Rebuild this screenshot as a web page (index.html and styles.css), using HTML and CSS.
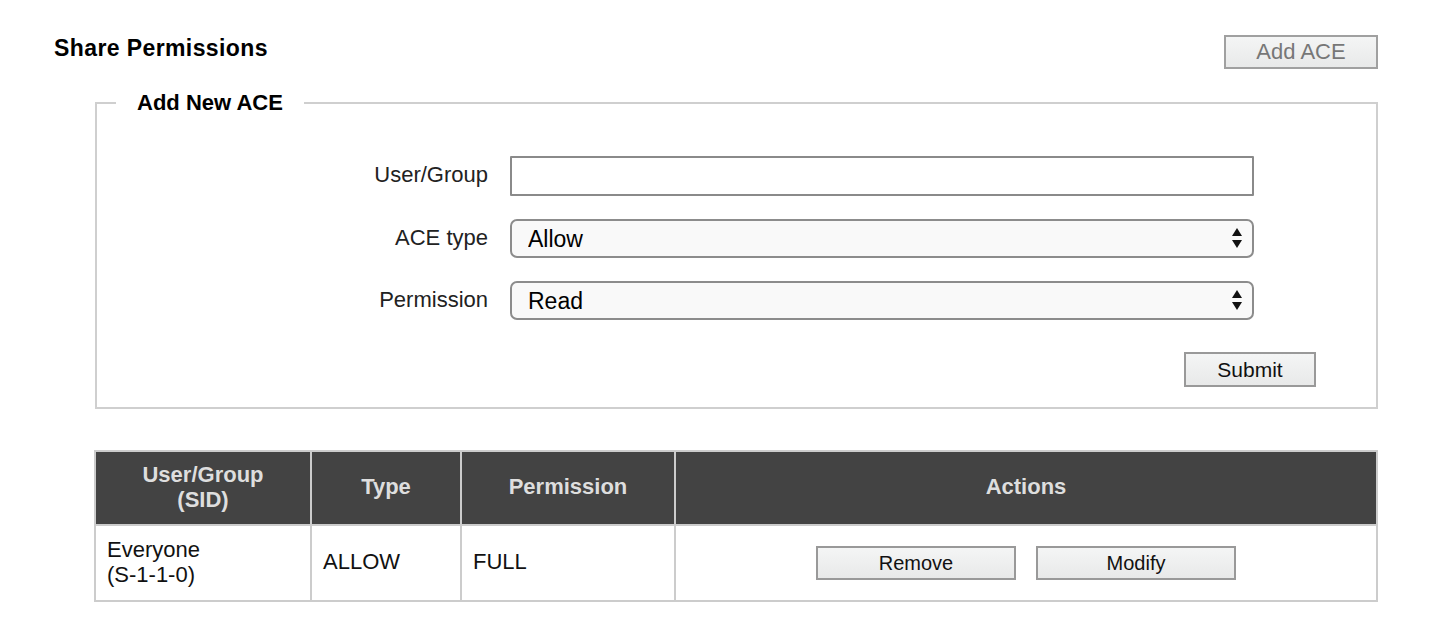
FILE: index.html
```html
<!DOCTYPE html>
<html>
<head>
<meta charset="utf-8">
<link rel="stylesheet" href="styles.css">
</head>
<body>
<div class="page">
  <div class="topbar">
    <h1 class="title">Share Permissions</h1>
    <button class="btn btn-add">Add ACE</button>
  </div>

  <fieldset class="ace-box">
    <legend class="ace-legend">Add New ACE</legend>
    <div class="form-grid">
      <label class="form-label">User/Group</label>
      <input class="text-input" type="text">
      <label class="form-label">ACE type</label>
      <div class="select-wrap">
        <select class="select"><option>Allow</option></select>
        <svg class="select-arrows" width="12" height="22" viewBox="0 0 12 22"><path d="M6 1 L11 9 L1 9 Z" fill="#111"/><path d="M1 13 L11 13 L6 21 Z" fill="#111"/></svg>
      </div>
      <label class="form-label">Permission</label>
      <div class="select-wrap">
        <select class="select"><option>Read</option></select>
        <svg class="select-arrows" width="12" height="22" viewBox="0 0 12 22"><path d="M6 1 L11 9 L1 9 Z" fill="#111"/><path d="M1 13 L11 13 L6 21 Z" fill="#111"/></svg>
      </div>
    </div>
    <div class="submit-row">
      <button class="btn btn-submit">Submit</button>
    </div>
  </fieldset>

  <table class="ace-table">
    <thead>
      <tr>
        <th class="col-user">User/Group<br>(SID)</th>
        <th class="col-type">Type</th>
        <th class="col-perm">Permission</th>
        <th class="col-actions">Actions</th>
      </tr>
    </thead>
    <tbody>
      <tr>
        <td>Everyone<br>(S-1-1-0)</td>
        <td>ALLOW</td>
        <td>FULL</td>
        <td class="actions-cell">
          <div class="actions">
            <button class="btn btn-row">Remove</button>
            <button class="btn btn-row">Modify</button>
          </div>
        </td>
      </tr>
    </tbody>
  </table>
</div>
</body>
</html>
```

FILE: styles.css
```css
* { box-sizing: border-box; }

html, body {
  margin: 0;
  padding: 0;
  background: #ffffff;
  font-family: "Liberation Sans", Arial, Helvetica, sans-serif;
  color: #111;
}

.page {
  padding: 35px 52px 0 54px;
}

.topbar {
  display: flex;
  justify-content: space-between;
  align-items: flex-start;
}

.title {
  margin: 0;
  font-size: 23px;
  letter-spacing: 0.4px;
  line-height: 26px;
  font-weight: bold;
  color: #000;
}

.btn {
  font-family: "Liberation Sans", Arial, Helvetica, sans-serif;
  background: linear-gradient(#f4f5f5, #e8e9e9);
  border: 2px solid #999;
  border-radius: 0;
  color: #111;
  padding: 0;
  cursor: pointer;
}

.btn-add {
  width: 154px;
  height: 34px;
  font-size: 22px;
  color: #777;
  border-color: #a0a0a0;
}

.ace-box {
  margin: 21px 0 0 41px;
  padding: 40px 0 20px 0;
  border: 2px solid #cfcfcf;
  min-width: 0;
}

.ace-legend {
  margin-left: 19px;
  padding: 0 21px;
  font-size: 22px;
  line-height: 26px;
  font-weight: bold;
  color: #000;
}

.form-grid {
  display: grid;
  grid-template-columns: 391px 744px;
  column-gap: 22px;
  row-gap: 23px;
  align-items: center;
}

.form-label {
  text-align: right;
  font-size: 22px;
  line-height: 26px;
  color: #222;
  padding-bottom: 2px;
}

.text-input {
  height: 40px;
  width: 744px;
  border: 2px solid #8a8a8a;
  border-radius: 1px;
  background: #fff;
  font-size: 22px;
  padding: 0 10px;
  margin: 0;
}

.select-wrap {
  position: relative;
  height: 39px;
}

.select {
  appearance: none;
  -webkit-appearance: none;
  width: 744px;
  height: 39px;
  border: 2px solid #8c8c8c;
  border-radius: 7px;
  background: #f9f9f9;
  font-family: "Liberation Sans", Arial, Helvetica, sans-serif;
  font-size: 23px;
  color: #000;
  padding: 0 0 0 16px;
  margin: 0;
}

.select-arrows {
  position: absolute;
  right: 11px;
  top: 8px;
  pointer-events: none;
}

.submit-row {
  display: flex;
  justify-content: flex-end;
  padding-right: 60px;
  margin-top: 32px;
}

.btn-submit {
  width: 132px;
  height: 35px;
  font-size: 21px;
}

.ace-table {
  margin: 41px 0 0 40px;
  width: 1284px;
  border-collapse: collapse;
  border: 2px solid #cccccc;
}

.ace-table th,
.ace-table td {
  border: 2px solid #cccccc;
}

.ace-table th {
  background: #434343;
  color: #dedede;
  font-size: 22px;
  line-height: 25px;
  font-weight: bold;
  height: 74px;
  text-align: center;
  padding: 0 8px 3px;
}

.col-user { width: 216px; }
.col-type { width: 150px; }
.col-perm { width: 214px; }

.ace-table td {
  height: 76px;
  font-size: 22px;
  line-height: 25px;
  color: #111;
  padding: 0 10px 3px 11px;
  text-align: left;
}

.ace-table td.actions-cell {
  text-align: center;
  padding: 0;
}

.actions {
  display: flex;
  justify-content: center;
  gap: 20px;
}

.btn-row {
  width: 200px;
  height: 34px;
  font-size: 20px;
}
```
